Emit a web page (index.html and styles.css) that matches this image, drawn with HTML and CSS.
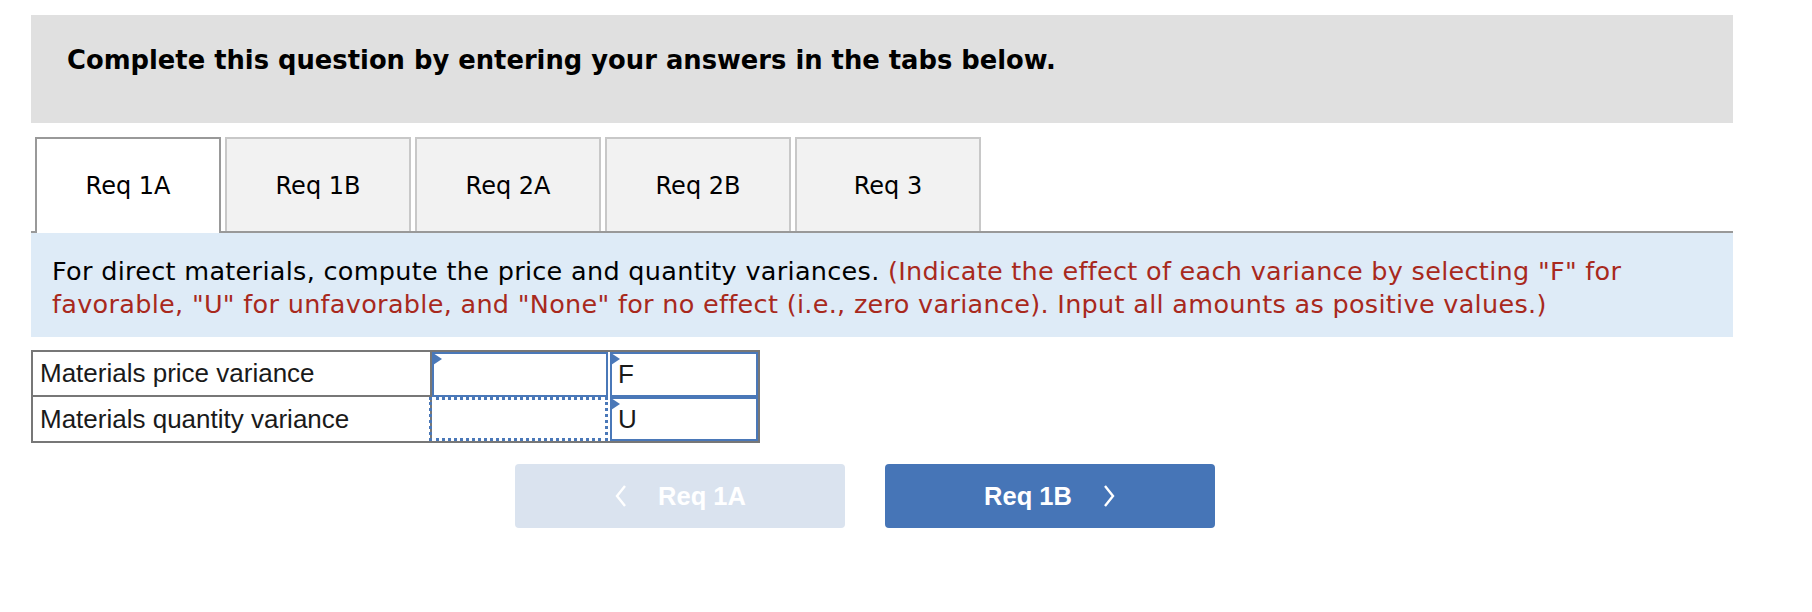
FILE: index.html
```html
<!DOCTYPE html>
<html>
<head>
<meta charset="utf-8">
<link rel="stylesheet" href="styles.css">
</head>
<body>
<div class="wrap">
  <div class="header">Complete this question by entering your answers in the tabs below.</div>
  <div class="tabs">
    <div class="tab active">Req 1A</div>
    <div class="tab">Req 1B</div>
    <div class="tab">Req 2A</div>
    <div class="tab">Req 2B</div>
    <div class="tab">Req 3</div>
  </div>
  <div class="info">For direct materials, compute the price and quantity variances. <span class="red">(Indicate the effect of each variance by selecting "F" for favorable, "U" for unfavorable, and "None" for no effect (i.e., zero variance). Input all amounts as positive values.)</span></div>
  <div class="tbl">
    <div class="lbl first">Materials price variance</div>
    <div class="cell solid"><span class="flag"></span></div>
    <div class="cell sel"><span class="flag"></span>F</div>
    <div class="lbl">Materials quantity variance</div>
    <div class="cell dotted"></div>
    <div class="cell sel"><span class="flag"></span>U</div>
  </div>
  <div class="nav">
    <div class="btn prev">
      <svg width="14" height="24" viewBox="0 0 14 24"><polyline points="11,2 3,12 11,22" fill="none" stroke="#fff" stroke-width="2.4"/></svg>
      <span>Req 1A</span>
    </div>
    <div class="btn next">
      <span>Req 1B</span>
      <svg width="14" height="24" viewBox="0 0 14 24"><polyline points="3,2 11,12 3,22" fill="none" stroke="#fff" stroke-width="2.4"/></svg>
    </div>
  </div>
</div>
</body>
</html>
```
FILE: styles.css
```css
* { box-sizing: border-box; }
body {
  margin: 0;
  background: #fff;
  font-family: "DejaVu Sans", Verdana, sans-serif;
  color: #000;
}
.wrap {
  width: 1702px;
  margin: 15px 0 0 31px;
}
.header {
  height: 108px;
  background: #e0e0e0;
  padding: 30px 0 0 36px;
  font-weight: bold;
  font-size: 25.8px;
  line-height: 30px;
}
.tabs {
  display: flex;
  align-items: flex-end;
  gap: 4px;
  margin-top: 14px;
  padding-left: 4px;
  border-bottom: 2px solid #999;
}
.tab {
  width: 186px;
  height: 94px;
  background: #f2f2f2;
  border: 2px solid #c8c8c8;
  border-bottom: 0;
  display: flex;
  align-items: center;
  justify-content: center;
  font-size: 24px;
  padding-top: 2px;
}
.tab.active {
  background: #fff;
  border-color: #999;
  height: 96px;
  margin-bottom: -2px;
  position: relative;
  padding-top: 0;
}
.info {
  background: #deebf7;
  height: 104px;
  padding: 22px 20px 0 21px;
  font-size: 25.5px;
  letter-spacing: 0.3px;
  line-height: 33px;
}
.red { color: #a8291d; }
.tbl {
  display: grid;
  grid-template-columns: 399px 176px 150px;
  grid-template-rows: 45px 44px;
  width: max-content;
  border: 2px solid #777;
  margin-top: 13px;
  font-family: "Liberation Sans", Arial, sans-serif;
  font-size: 26px;
  color: #1a1a1a;
}
.lbl {
  border-right: 2px solid #777;
  padding-left: 7px;
  display: flex;
  align-items: center;
}
.lbl.first { border-bottom: 2px solid #777; }
.cell {
  position: relative;
  display: flex;
  align-items: center;
}
.solid { border: 2px solid #4a78b8; }
.dotted { border: 3px dotted #4a78b8; margin-left: -3px; }
.sel {
  border: 2px solid #4a78b8;
  margin-left: 2px;
  padding-left: 6px;
}
.flag {
  position: absolute;
  top: -1px;
  left: -1px;
  width: 0;
  height: 0;
  border-left: 9px solid #4a78b8;
  border-top: 6px solid transparent;
  border-bottom: 6px solid transparent;
}
.nav {
  display: flex;
  gap: 40px;
  margin: 21px 0 0 484px;
}
.btn {
  width: 330px;
  height: 64px;
  border-radius: 4px;
  display: flex;
  align-items: center;
  justify-content: center;
  color: #fff;
  font-family: "Liberation Sans", Arial, sans-serif;
  font-weight: bold;
  font-size: 25.5px;
}
.prev { background: #dae3ef; gap: 30px; }
.next { background: #4675b7; gap: 30px; }
```
